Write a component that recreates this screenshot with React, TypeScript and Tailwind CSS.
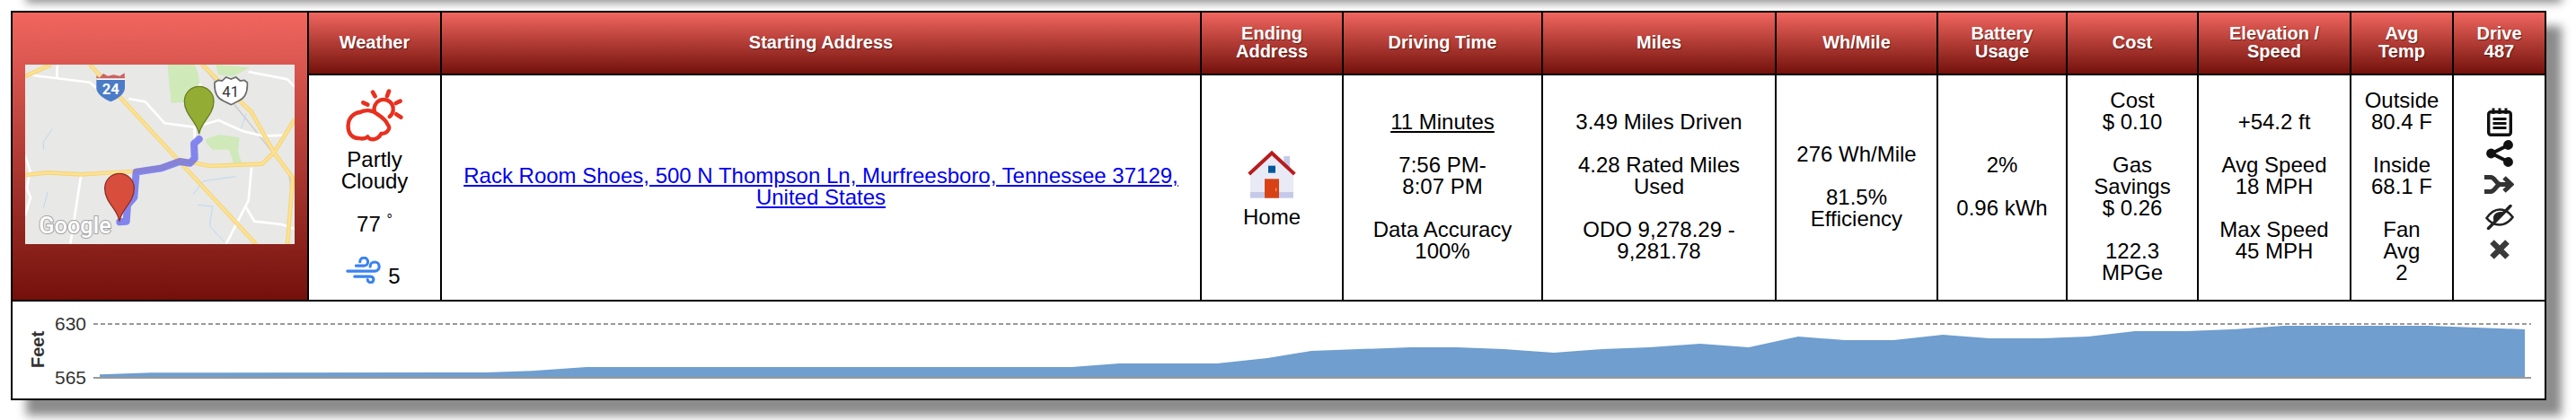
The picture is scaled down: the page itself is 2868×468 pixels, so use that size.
import React from "react";
import { FcHome } from "react-icons/fc";

const headerCls =
  "h-[70px] shrink-0 border-b-2 border-black bg-linear-to-b from-[#f1665f] to-[#74100a] flex items-center justify-center text-center text-white font-bold text-[20px] leading-[20px] pb-[2px] [text-shadow:1px_1px_1px_rgba(0,0,0,0.45)]";

function Col({ w, title, children }: { w: string; title: React.ReactNode; children: React.ReactNode }) {
  return (
    <div className={`${w} shrink-0 border-l-2 border-black flex flex-col`}>
      <div className={headerCls}>
        <div>{title}</div>
      </div>
      <div className="h-[250px] pb-[2px] flex flex-col items-center justify-center text-center text-black text-[24px] leading-[24px]">
        {children}
      </div>
    </div>
  );
}

function MapPicture() {
  const yellow = [
    "M240 36 L795 636",
    "M24 405 L100 397 L210 403 L380 393 L480 380 L545 355 L640 375 L815 368 L855 330 L924 220",
    "M615 36 L780 195 L855 330 L918 415 L900 636",
    "M24 75 L110 36",
  ];
  const white = [
    "M50 72 L240 95 L262 115",
    "M132 36 L130 80",
    "M370 150 L425 160 L490 232 L590 245 L670 222 L750 258 L820 275 L890 272",
    "M590 245 L590 290",
    "M610 100 L585 140",
    "M770 60 L900 85 L924 110",
    "M24 340 L40 390 L30 450 L42 480 L24 540",
    "M210 410 L175 636",
    "M780 380 L770 490 L695 636",
    "M760 510 L790 560 L880 570 L924 585",
  ];
  return (
    <svg viewBox="24 36 900 600" className="w-[300px] h-[200px] block">
      <rect x="24" y="36" width="900" height="600" fill="#e8e8e6" />
      <path d="M500 36 L505 100 L512 165 L560 160 L590 130 L608 100 L600 60 L590 36 Z" fill="#cfe9b9" />
      <path d="M660 36 L775 45 L720 75 L670 70 Z" fill="#cfe9b9" />
      <path d="M628 285 L670 270 L740 280 L735 330 L748 365 L720 365 L705 320 L650 320 L630 300 Z" fill="#cfe9b9" />
      <g fill="none" stroke="#aed6f5" strokeWidth="2.5">
        <path d="M115 250 L85 295 L85 320" />
        <path d="M100 460 L85 515" />
        <path d="M585 470 L620 425 L728 410" />
        <path d="M600 505 L650 510 L640 575 L690 630" />
        <path d="M762 200 L745 250" />
      </g>
      <path d="M625 50 L780 240 L905 400 L915 470" fill="none" stroke="#cfcfd2" strokeWidth="5" />
      <g fill="none" stroke="#ffffff" strokeWidth="8">
        {white.map((d) => (
          <path key={d} d={d} />
        ))}
      </g>
      <g fill="none" stroke="#f5d67e" strokeWidth="14">
        {yellow.map((d) => (
          <path key={d} d={d} />
        ))}
      </g>
      <g fill="none" stroke="#fde293" strokeWidth="7">
        {yellow.map((d) => (
          <path key={d} d={d} />
        ))}
      </g>
      <path
        d="M605 285 L588 300 L590 350 L575 365 L540 360 L480 382 L395 395 L388 480 L366 505 L362 560 L340 562"
        fill="none"
        stroke="#5a5ef0"
        strokeOpacity="0.72"
        strokeWidth="24"
        strokeLinecap="round"
        strokeLinejoin="round"
      />
      <path d="M262 85 L262 72 L272 80 L285 66 L300 74 L320 70 L340 74 L356 64 L357 85 Z" fill="#c96462" />
      <path d="M262 85 H357 V115 C355 135 335 150 310 160 C285 150 264 135 262 115 Z" fill="#4a7cc7" />
      <rect x="262" y="82" width="95" height="5" fill="#ffffff" />
      <text x="310" y="136" textAnchor="middle" fontFamily="'Roboto', sans-serif" fontWeight="700" fontSize="50" fill="#ffffff">24</text>
      <path
        d="M668 88 L682 90 L695 78 L712 84 L728 78 L742 90 L756 88 L766 96 C768 130 755 150 735 158 L712 170 L688 158 C668 150 655 130 657 96 Z"
        fill="#ffffff"
        stroke="#6a6a6a"
        strokeWidth="5"
      />
      <text x="710" y="144" textAnchor="middle" fontFamily="'Roboto', sans-serif" fontSize="50" fill="#333333">41</text>
      <path d="M605 268 C600 228 556 205 556 158 A49 49 0 0 1 654 158 C654 205 610 228 605 268 Z" fill="#93ac33" stroke="#6a7d23" strokeWidth="4" />
      <path d="M339 560 C334 520 290 497 290 449 A49 49 0 0 1 388 449 C388 497 344 520 339 560 Z" fill="#d84e3c" stroke="#8e2f25" strokeWidth="4" />
      <text
        x="70"
        y="600"
        fontFamily="'Roboto', sans-serif"
        fontWeight="500"
        fontSize="76"
        fill="#ffffff"
        stroke="#a3a3a3"
        strokeWidth="6"
        paintOrder="stroke"
      >
        Google
      </text>
    </svg>
  );
}

function WeatherIcon() {
  return (
    <svg viewBox="132 22 192 180" className="w-[64px] h-[60px] blur-[0.5px]" fill="none" stroke="#e8301f" strokeLinecap="round" strokeLinejoin="round">
      <g strokeWidth="13">
        <path d="M175 190 C150 190 138 170 140 145 C142 120 160 105 180 103 C195 95 220 95 235 108 C250 118 268 130 272 145 C285 155 270 175 250 175 C240 195 215 200 205 185 C195 195 185 192 175 190 Z" />
        <path d="M228 102 A32 32 0 1 1 278 118" />
      </g>
      <g strokeWidth="14">
        <path d="M222 36 L230 50" />
        <path d="M276 33 L270 49" />
        <path d="M314 66 L299 73" />
        <path d="M301 110 L316 120" />
        <path d="M190 71 L205 78" />
      </g>
    </svg>
  );
}

function WindIcon() {
  return (
    <svg viewBox="135 585 125 95" className="w-[40px] h-[30px] shrink-0" fill="none" stroke="#3a82f0" strokeWidth="10" strokeLinecap="round">
      <path d="M170 617 H198 A14 14 0 1 0 184 603" />
      <path d="M140 636 H236 A16 16 0 1 0 220 620" />
      <path d="M165 655 H222 A10.5 10.5 0 1 1 211 666" />
    </svg>
  );
}

function NotepadIcon() {
  return (
    <svg viewBox="0 0 28 32" className="w-[28px] h-[32px] block" fill="none" stroke="#111111">
      <rect x="1.7" y="4.7" width="24.6" height="25.6" rx="2.5" strokeWidth="3.4" />
      <path d="M7 0.5 V7 M14 0.5 V7 M21 0.5 V7" strokeWidth="3" />
      <path d="M6.5 12.5 H21.5 M6.5 17.5 H21.5 M6.5 22.5 H21.5" strokeWidth="2.8" />
    </svg>
  );
}

function ShareIcon() {
  return (
    <svg viewBox="0 0 30 30" className="w-[30px] h-[30px] block" fill="#111111" stroke="#111111">
      <path d="M24 6 L6 15 L24 24" fill="none" strokeWidth="3.8" />
      <circle cx="24.5" cy="5.5" r="5.4" stroke="none" />
      <circle cx="5.5" cy="15" r="5.4" stroke="none" />
      <circle cx="24.5" cy="24.5" r="5.4" stroke="none" />
    </svg>
  );
}

function MergeIcon() {
  return (
    <svg viewBox="0 0 33 21" className="w-[33px] h-[21px] block" fill="none" stroke="#333333" strokeWidth="5">
      <path d="M0 2.5 H7 C12 2.5 13 10.5 18 10.5 H28" />
      <path d="M0 18.5 H7 C12 18.5 13 10.5 18 10.5" />
      <path d="M22 3 L30 10.5 L22 18" strokeWidth="5" />
    </svg>
  );
}

function EyeOffIcon() {
  return (
    <svg viewBox="0 0 32 28" className="w-[32px] h-[28px] block" fill="none" stroke="#222222">
      <path d="M1.5 15 C7 7 13 5.5 16 5.5 C19 5.5 25.5 7 30.5 14 C25.5 21 19 22.5 16 22.5 C13 22.5 7 22 1.5 15 Z" strokeWidth="2.6" />
      <path d="M10 18 C8 10 15 8 19 9 L10 18 Z" fill="#222222" strokeWidth="1.5" />
      <path d="M3.5 26.5 L28 1.5" strokeWidth="3.4" strokeLinecap="round" />
    </svg>
  );
}

function CloseIcon() {
  return (
    <svg viewBox="0 0 22 22" className="w-[22px] h-[22px] block" stroke="#3a3a3a" strokeWidth="6.5">
      <path d="M2.5 2.5 L19.5 19.5 M19.5 2.5 L2.5 19.5" />
    </svg>
  );
}

const areaPoints =
  "111,417.3 168,415.3 541,415 592,413.3 653,409 1193,409 1246,405 1355,405 1411,399 1460,391 1570,387 1622,387 1674,389 1730,393 1784,389 1836,387 1893,383 1947,387 2002,375 2054,379 2108,379 2163,373 2215,377 2272,377 2325,375 2377,369 2434,369 2490,366.7 2543,363 2704,363 2811,367 2811,420 111,420";

function Chart() {
  return (
    <svg viewBox="14 336 2819 108" className="w-[2819px] h-[108px] block">
      <polygon points={areaPoints} fill="#6f9ecf" />
      <path d="M104 361 H2818" stroke="#999999" strokeWidth="2" strokeDasharray="5 3" fill="none" />
      <path d="M104 421 H2818" stroke="#999999" strokeWidth="2" fill="none" />
      <text x="96" y="368" textAnchor="end" fontSize="21" fill="#333333">630</text>
      <text x="96" y="428" textAnchor="end" fontSize="21" fill="#333333">565</text>
      <text x="0" y="0" transform="translate(49 410) rotate(-90)" fontSize="20" fontWeight="700" fill="#333333">Feet</text>
    </svg>
  );
}

export default function App() {
  return (
    <div className="w-[2868px] h-[468px] overflow-hidden bg-white flex flex-col font-['Liberation_Sans',Arial,sans-serif]">
      <div className="ml-[12px] w-[2823px] h-[40px] mt-[-54px] shrink-0 border-2 border-black bg-white shadow-[17px_17px_10px_#8c8c8c]" />
      <div className="mt-[26px] ml-[12px] w-[2823px] h-[434px] shrink-0 border-2 border-black bg-white shadow-[17px_17px_10px_#8c8c8c]">
        <div className="flex h-[322px] border-b-2 border-black">
          <div className="w-[328px] shrink-0 bg-linear-to-b from-[#f1665f] to-[#74100a] flex items-center justify-center pb-[4px]">
            <MapPicture />
          </div>
          <div className="w-[148px] shrink-0 border-l-2 border-black flex flex-col">
            <div className={headerCls}>Weather</div>
            <div className="h-[250px] flex flex-col items-center text-center text-black text-[24px] leading-[24px] pt-[14px]">
              <WeatherIcon />
              <div className="mt-[8px]">
                Partly
                <br />
                Cloudy
              </div>
              <div className="mt-[24px]">
                77 <sup className="text-[16px]">°</sup>
              </div>
              <div className="mt-[24px] flex items-start gap-[7px] pr-[3px]">
                <WindIcon />
                <span className="mt-[10px]">5</span>
              </div>
            </div>
          </div>
          <Col w="w-[846px]" title="Starting Address">
            <a href="#" className="text-[#0000ee] underline">
              Rack Room Shoes, 500 N Thompson Ln, Murfreesboro, Tennessee 37129,
              <br />
              United States
            </a>
          </Col>
          <Col
            w="w-[158px]"
            title={
              <>
                Ending
                <br />
                Address
              </>
            }
          >
            <FcHome className="w-[64px] h-[64px]" />
            <div className="mt-[4px]">Home</div>
          </Col>
          <Col w="w-[222px]" title="Driving Time">
            <div>
              <span className="underline">11 Minutes</span>
              <br />
              <br />
              7:56 PM-
              <br />
              8:07 PM
              <br />
              <br />
              Data Accuracy
              <br />
              100%
            </div>
          </Col>
          <Col w="w-[260px]" title="Miles">
            <div>
              3.49 Miles Driven
              <br />
              <br />
              4.28 Rated Miles
              <br />
              Used
              <br />
              <br />
              ODO 9,278.29 -
              <br />
              9,281.78
            </div>
          </Col>
          <Col w="w-[180px]" title="Wh/Mile">
            <div>
              276 Wh/Mile
              <br />
              <br />
              81.5%
              <br />
              Efficiency
            </div>
          </Col>
          <Col
            w="w-[144px]"
            title={
              <>
                Battery
                <br />
                Usage
              </>
            }
          >
            <div>
              2%
              <br />
              <br />
              0.96 kWh
            </div>
          </Col>
          <Col w="w-[146px]" title="Cost">
            <div>
              Cost
              <br />$ 0.10
              <br />
              <br />
              Gas
              <br />
              Savings
              <br />$ 0.26
              <br />
              <br />
              122.3
              <br />
              MPGe
            </div>
          </Col>
          <Col
            w="w-[170px]"
            title={
              <>
                Elevation /
                <br />
                Speed
              </>
            }
          >
            <div>
              +54.2 ft
              <br />
              <br />
              Avg Speed
              <br />
              18 MPH
              <br />
              <br />
              Max Speed
              <br />
              45 MPH
            </div>
          </Col>
          <Col
            w="w-[114px]"
            title={
              <>
                Avg
                <br />
                Temp
              </>
            }
          >
            <div>
              Outside
              <br />
              80.4 F
              <br />
              <br />
              Inside
              <br />
              68.1 F
              <br />
              <br />
              Fan
              <br />
              Avg
              <br />2
            </div>
          </Col>
          <div className="w-[103px] shrink-0 border-l-2 border-black flex flex-col">
            <div className={headerCls}>
              <div>
                Drive
                <br />
                487
              </div>
            </div>
            <div className="h-[250px] flex flex-col items-center pt-[36px]">
              <NotepadIcon />
              <div className="mt-[4px]">
                <ShareIcon />
              </div>
              <div className="mt-[9px]">
                <MergeIcon />
              </div>
              <div className="mt-[12px]">
                <EyeOffIcon />
              </div>
              <div className="mt-[11px]">
                <CloseIcon />
              </div>
            </div>
          </div>
        </div>
        <Chart />
      </div>
    </div>
  );
}
